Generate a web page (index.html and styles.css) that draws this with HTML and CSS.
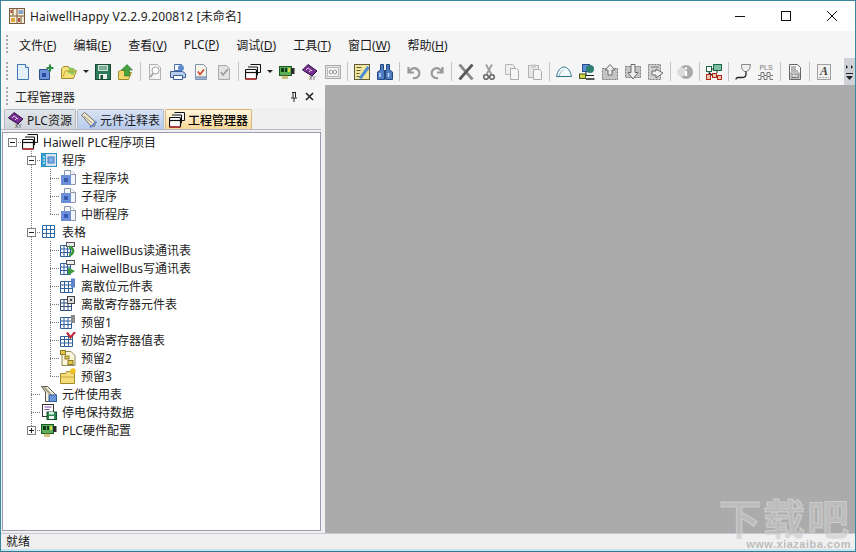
FILE: index.html
```html
<!DOCTYPE html>
<html lang="zh-CN">
<head>
  <meta charset="UTF-8" />
  <title>HaiwellHappy</title>
  <link rel="stylesheet" href="styles.css">
</head>
<body>

  <!-- icon sprites -->
  <svg class="sprites" width="0" height="0">
    <symbol id="i-app" viewBox="0 0 16 16"><rect x=".5" y=".5" width="15" height="15" fill="#f4ecd8" stroke="#7a5a38"/><path d="M.5 8h15M8 .5v15M4 .5v7M12 8v7" stroke="#7a5a38"/><rect x="1.500" y="2" width="2" height="3" fill="#b04a3a"/><rect x="9.500" y="2" width="5" height="4" fill="#8aa4c8"/><rect x="2" y="10" width="4" height="4" fill="#d8a838"/><rect x="9" y="10" width="2" height="4" fill="#b04a3a"/></symbol>
    <symbol id="i-new" viewBox="0 0 16 16"><path d="M2.500 .5h8l3 3v12h-11z" fill="#e4f0fb" stroke="#3f78b4"/><path d="M10.500 .5v3h3" fill="#fff" stroke="#3f78b4"/></symbol>
    <symbol id="i-addprog" viewBox="0 0 16 16"><path d="M1.500 5.500h8l2 2v8h-10z" fill="#6f94d8" stroke="#2f4f90"/><rect x="4" y="9" width="4" height="4" fill="#2a4c9c"/><path d="M12 .5v7M8.500 4h7" stroke="#2e8b45" stroke-width="2.200"/></symbol>
    <symbol id="i-open" viewBox="0 0 16 16"><path d="M.5 14.500v-10l2-2h5l1 2h4v2h3l-3 8z" fill="#f6e07a" stroke="#a08a2e"/><path d="M6 8l3-5 6 3-3 5z" fill="#8cc85c"/><path d="M2 13l2-6h10" fill="none" stroke="#c8a838"/></symbol>
    <symbol id="i-save" viewBox="0 0 16 16"><rect x=".5" y=".5" width="15" height="15" fill="#2c7a58" stroke="#174a32"/><rect x="3" y="1" width="10" height="6" fill="#cfe2d8"/><path d="M4 3h8M4 5h8" stroke="#2c7a58"/><rect x="4" y="10" width="8" height="5" fill="#f0f0f0"/><rect x="5.500" y="11" width="2.500" height="4" fill="#174a32"/></symbol>
    <symbol id="i-upload" viewBox="0 0 16 16"><path d="M.5 15.500v-8l2-1h8v2h3l-3 7z" fill="#f2d86a" stroke="#a08a2e"/><path d="M9 .5l5.500 5.500h-3v6h-5V6h-3z" fill="#44a23c" stroke="#2c7028" stroke-width=".6"/></symbol>
    <symbol id="i-preview" viewBox="0 0 16 16"><path d="M2.500 .5h8l3 3v12h-11z" fill="#f4f4f4" stroke="#b0b0b0"/><circle cx="8.500" cy="6.500" r="3.500" fill="#fff" stroke="#a0a0a0"/><path d="M6 9.500l-2.500 3.500" stroke="#a0a0a0" stroke-width="1.800"/></symbol>
    <symbol id="i-print" viewBox="0 0 16 16"><path d="M4.500 .5h7v6h-7z" fill="#fff" stroke="#4a6fa8"/><path d="M.5 7.500h12l3 2v4h-15z" fill="#b8cdea" stroke="#3d5f98"/><path d="M3.500 11.500h9v4h-9z" fill="#fff" stroke="#3d5f98"/><circle cx="11" cy="4" r="3" fill="#5f8cce"/></symbol>
    <symbol id="i-check" viewBox="0 0 16 16"><path d="M2.500 .5h8l3 3v12h-11z" fill="#f6f2e4" stroke="#7f95b4"/><path d="M5 7.500l2 3 4-5" fill="none" stroke="#d0402c" stroke-width="1.600"/><path d="M3 13.500h10" stroke="#8aa0c4" stroke-width="2.500"/></symbol>
    <symbol id="i-checkgray" viewBox="0 0 16 16"><path d="M2.500 1.500h8l3 3v11h-11z" fill="#e2e2e2" stroke="#a8a8a8"/><path d="M5 8l2 3 5-6" fill="none" stroke="#9a9a9a" stroke-width="1.600"/></symbol>
    <symbol id="i-stack" viewBox="0 0 16 16"><path d="M5.500 .5h10v8h-3" fill="#f6f6f6" stroke="#111"/><path d="M3 3h9.500v8h-3" fill="#f6f6f6" stroke="#111"/><rect x=".5" y="5.500" width="11" height="9.500" rx="1" fill="#fff" stroke="#111" stroke-width="1.200"/><path d="M.5 8.500h11" stroke="#111" stroke-width="1.200"/><path d="M.5 15h11" stroke="#b82a2a" stroke-width="1.500"/></symbol>
    <symbol id="i-board" viewBox="0 0 16 16"><rect x="0.500" y="2.500" width="12" height="9" fill="#5cae58" stroke="#1c5a24"/><rect x="2" y="4" width="3" height="4" fill="#123c18"/><rect x="6" y="4" width="2" height="4" fill="#123c18"/><rect x="9" y="4" width="2" height="4" fill="#d4e04c"/><rect x="12" y="4" width="3.500" height="6" fill="#2b2b2b"/><path d="M4 11.500v3.500M6 11.500v3.500M8 11.500v3.500" stroke="#b09a30" stroke-width="1.200"/></symbol>
    <symbol id="i-cc" viewBox="0 0 16 16"><rect x=".5" y="1.500" width="15" height="13" fill="#e4e4e4" stroke="#aaa"/><rect x="2.500" y="3.500" width="11" height="9" fill="#f4f4f4" stroke="#bbb"/><circle cx="6" cy="8" r="1.800" fill="none" stroke="#999"/><circle cx="10" cy="8" r="1.800" fill="none" stroke="#999"/></symbol>
    <symbol id="i-list" viewBox="0 0 16 16"><rect x=".5" y=".5" width="15" height="15" fill="#f2e69c" stroke="#5c5c3c"/><path d="M2.500 3.500h5M2.500 6.500h4M2.500 9.500h3M2.500 12.500h3" stroke="#5c5c3c"/><path d="M6 14.500L14.500 3" stroke="#4f8cd0" stroke-width="3"/></symbol>
    <symbol id="i-binoc" viewBox="0 0 16 16"><path d="M3.500 .5h3v5l1 2v8h-7V8l3-2zM9.500 .5h3V6l3 2v7.500h-7v-8l1-2z" fill="#4d7cc0" stroke="#24477e"/><rect x="7" y="6" width="2" height="3" fill="#24477e"/><path d="M3 9v4M11.500 9v4" stroke="#c4d8f4" stroke-width="1.500"/></symbol>
    <symbol id="i-undo" viewBox="0 0 16 16"><path d="M2.500 3v5.500H8M3.500 8A5 5 0 1 1 7 14" fill="none" stroke="#9a9a9a" stroke-width="2.200"/></symbol>
    <symbol id="i-redo" viewBox="0 0 16 16"><path d="M13.500 3v5.500H8M12.500 8A5 5 0 1 0 9 14" fill="none" stroke="#9a9a9a" stroke-width="2.200"/></symbol>
    <symbol id="i-delete" viewBox="0 0 16 16"><path d="M1.500 .5l13 15" stroke="#8a8a8a" stroke-width="2.800"/><path d="M14.500 .5L1.500 15.500" stroke="#585858" stroke-width="2.800"/></symbol>
    <symbol id="i-cut" viewBox="0 0 16 16"><path d="M5 .5l5.500 10M11 .5L5.500 10.500" stroke="#9c9c9c" stroke-width="1.800"/><circle cx="5" cy="13" r="2.300" fill="none" stroke="#686868" stroke-width="1.600"/><circle cx="11" cy="13" r="2.300" fill="none" stroke="#686868" stroke-width="1.600"/></symbol>
    <symbol id="i-copy" viewBox="0 0 16 16"><path d="M1.500 .5h7l2 2v8h-9z" fill="#eee" stroke="#b4b4b4"/><path d="M6.500 4.500h6l2 2v9h-8z" fill="#f6f6f6" stroke="#acacac"/></symbol>
    <symbol id="i-paste" viewBox="0 0 16 16"><rect x="1.500" y="1.500" width="10" height="12" fill="#e6e6e6" stroke="#b4b4b4"/><rect x="4" y=".5" width="5" height="3" fill="#c8c8c8"/><path d="M6.500 5.500h6l2 2v8h-8z" fill="#f6f6f6" stroke="#acacac"/></symbol>
    <symbol id="i-cloud" viewBox="0 0 16 16"><path d="M.5 12.500C1.500 7 4.500 3 8 3s6.500 4 7.500 9.500z" fill="#f4f9fc" stroke="#2f7488"/><path d="M3 12c1-3 3-6 5-6" fill="none" stroke="#8ab8c8"/></symbol>
    <symbol id="i-net" viewBox="0 0 16 16"><rect x="3.500" y=".5" width="7" height="7" fill="#5d8fd6" stroke="#2b4f8c"/><circle cx="11" cy="5" r="4" fill="#2f7f70"/><path d="M7 8v4M1 11.500h14" stroke="#222"/><rect x=".5" y="10" width="6" height="4.500" fill="#d8d040" stroke="#3a5a20"/><path d="M7 15h8.500" stroke="#222" stroke-width="1.500"/></symbol>
    <symbol id="i-grayup" viewBox="0 0 16 16"><rect x=".5" y="4.500" width="15" height="11" fill="#c4c4c4" stroke="#7c7c7c" stroke-dasharray="2 1"/><path d="M8 .5l5 5.500h-3v5H6V6H3z" fill="#eee" stroke="#6c6c6c"/></symbol>
    <symbol id="i-graydown" viewBox="0 0 16 16"><rect x=".5" y="2.500" width="15" height="11" fill="#c4c4c4" stroke="#7c7c7c" stroke-dasharray="2 1"/><path d="M6 .5h4v8h3l-5 6.500-5-6.500h3z" fill="#eee" stroke="#6c6c6c"/></symbol>
    <symbol id="i-grayright" viewBox="0 0 16 16"><rect x=".5" y=".5" width="12" height="15" fill="#cfcfcf" stroke="#7c7c7c" stroke-dasharray="2 1"/><path d="M8 5v2H4v4h4v3l7-5z" fill="#eee" stroke="#6c6c6c"/><path d="M3 3h8" stroke="#777"/></symbol>
    <symbol id="i-info" viewBox="0 0 16 16"><circle cx="9" cy="8" r="7" fill="#aaa"/><circle cx="4.500" cy="8" r="4.500" fill="#dcdcdc"/><path d="M9 3.500v2M9 7v5" stroke="#fff" stroke-width="2.200"/></symbol>
    <symbol id="i-tree" viewBox="0 0 16 16"><rect x="7.500" y=".5" width="8" height="6" fill="#7ec0a0" stroke="#1c6a4a"/><rect x=".5" y="2.500" width="5" height="5" fill="#fff" stroke="#1c6a4a"/><path d="M5 5h3M3 8v3h4M11 6v3" stroke="#333"/><rect x=".5" y="10.500" width="4" height="5" fill="#f0c4b4" stroke="#b02a1a"/><rect x="6.500" y="9.500" width="4" height="4" fill="#f0c4b4" stroke="#b02a1a"/><rect x="11.500" y="11.500" width="4" height="4" fill="#f0c4b4" stroke="#b02a1a"/></symbol>
    <symbol id="i-plug" viewBox="0 0 16 16"><path d="M6.500 .5h9l-1 5-3 2H9L7 5z" fill="#efefef" stroke="#888"/><path d="M11 7.500v3c0 2.500-1.500 3-4 3H3c-1 0-2 .5-2 2" fill="none" stroke="#222" stroke-width="1.300"/></symbol>
    <symbol id="i-note" viewBox="0 0 16 16"><path d="M.5 3l3-2.500 11 9.500-1 4.500-4-1z" fill="#f6ecc8" stroke="#6c6c6c"/><path d="M9 15.500l6.500-6" stroke="#6a86c8" stroke-width="2"/><path d="M3 4l8 7" stroke="#8a8a8a"/></symbol>
    <symbol id="i-prog" viewBox="0 0 16 16"><rect x=".5" y="1.500" width="15" height="13" fill="#d4e6f6" stroke="#2a90c0"/><rect x="1" y="2" width="4" height="12" fill="#35a0d0"/><path d="M2 5h2M2 8h2M2 11h2" stroke="#fff"/><rect x="7" y="5" width="6" height="6" fill="#82aee8" stroke="#5078b8"/></symbol>
    <symbol id="i-block" viewBox="0 0 16 16"><path d="M4.500 .5h6l5 4v10h-11z" fill="#f4f6fa" stroke="#8a96aa"/><path d="M10.500 .5v4h5" fill="#fff" stroke="#8a96aa"/><rect x="1" y="5" width="10" height="10" fill="#6d8ed8"/><rect x="4" y="8" width="4" height="4" fill="#3a5cb0"/></symbol>
    <symbol id="i-grid" viewBox="0 0 16 16"><path d="M1.500 1.500h12v12h-12zM1.500 5.500h12M1.500 9.500h12M5.500 1.500v12M9.500 1.500v12" fill="#fff" stroke="#2f6aa4"/></symbol>
    <symbol id="i-gridread" viewBox="0 0 16 16"><path d="M.5 3.500h10v11H.5zM.5 7h10M.5 10.500h10M4 3.500v11M7.500 3.500v11" fill="#fff" stroke="#2f5f9c"/><rect x="6.500" y=".5" width="8" height="4" fill="#eee" stroke="#555"/><path d="M9 5a4 4 0 1 1 0 8" fill="none" stroke="#3d9a3a" stroke-width="2.800"/></symbol>
    <symbol id="i-gridwrite" viewBox="0 0 16 16"><path d="M.5 3.500h10v11H.5zM.5 7h10M.5 10.500h10M4 3.500v11M7.500 3.500v11" fill="#fff" stroke="#2f5f9c"/><rect x="6.500" y=".5" width="8" height="4" fill="#eee" stroke="#555"/><path d="M8 7.500l7 3.500-7 4.500z" fill="#3d9a3a"/></symbol>
    <symbol id="i-gridbit" viewBox="0 0 16 16"><path d="M.5 3.500h12v11H.5zM.5 7h12M.5 10.500h12M4.500 3.500v11M8.500 3.500v11" fill="#fff" stroke="#2f5f9c"/><rect x="11" y=".5" width="4" height="9" fill="#5f80cc"/></symbol>
    <symbol id="i-gridreg" viewBox="0 0 16 16"><path d="M.5 3.500h11v11H.5zM.5 7h11M.5 10.500h11M4 3.500v11M8 3.500v11" fill="#fff" stroke="#2f4f7c"/><rect x="7.500" y=".5" width="7" height="7" fill="#ddd" stroke="#444"/><rect x="10" y="3" width="2" height="2" fill="#444"/></symbol>
    <symbol id="i-gridres" viewBox="0 0 16 16"><path d="M.5 3.500h11v11H.5zM.5 7h11M.5 10.500h11M4 3.500v11M8 3.500v11" fill="#fff" stroke="#2f5f9c"/><path d="M11 1h4v8h-4z" fill="#8c8c8c"/></symbol>
    <symbol id="i-gridinit" viewBox="0 0 16 16"><path d="M.5 4.500h12v10H.5zM.5 7.500h12M.5 11h12M4.500 4.500v10M8.500 4.500v10" fill="#fff" stroke="#2f5f9c"/><path d="M7 .5l3.500 5 4.500-5.500" fill="none" stroke="#c42a3a" stroke-width="2.200"/></symbol>
    <symbol id="i-sheet" viewBox="0 0 16 16"><path d="M2 1.500h9l4 4v10H2z" fill="#fbf6d8" stroke="#8a8a5a"/><rect x=".5" y=".5" width="5" height="4" fill="#e8c848" stroke="#8a7a2a"/><rect x="5" y="6" width="4" height="3" fill="#e8c848" stroke="#8a7a2a"/><rect x="8" y="10.500" width="5" height="4" fill="#e8c848" stroke="#8a7a2a"/></symbol>
    <symbol id="i-folder" viewBox="0 0 16 16"><path d="M.5 15.500v-10h5l1-2h5v2h3v10z" fill="#f6dc78" stroke="#a08a2e"/><path d="M.5 9h14" stroke="#c8a840"/><circle cx="13" cy="3" r="2.800" fill="#f4c020"/></symbol>
    <symbol id="i-usage" viewBox="0 0 16 16"><path d="M.5 .5h6l8.500 8.500v6.500H4.500V6z" fill="#f6f2e0" stroke="#555"/><path d="M3 1l8 9" stroke="#a8a080" stroke-width="2"/><rect x="8" y="9" width="7.500" height="6.500" fill="#6a96d8" stroke="#2f5f9c"/></symbol>
    <symbol id="i-retain" viewBox="0 0 16 16"><rect x="1.500" y=".5" width="11" height="12" fill="#fff" stroke="#333"/><path d="M3.500 3h7M3.500 5.500h5" stroke="#7a4aa8"/><rect x="6" y="8" width="9.500" height="7.500" fill="#2f8a50" stroke="#14502c"/><rect x="8" y="8" width="5" height="2.500" fill="#e0efe4"/><rect x="8" y="12" width="5" height="3" fill="#f4f4f4"/></symbol>
  </svg>

  <div class="window">
    <div class="titlebar">
      <svg class="icon app-icon"><use href="#i-app"/></svg>
      <span class="title-text">HaiwellHappy V2.2.9.200812 [未命名]</span>
      <div class="win-buttons">
        <svg class="win-btn" viewBox="0 0 46 30"><path d="M18 15.500h10" stroke="#111"/></svg>
        <svg class="win-btn" viewBox="0 0 46 30"><rect x="18.500" y="10.500" width="9" height="9" fill="none" stroke="#111"/></svg>
        <svg class="win-btn" viewBox="0 0 46 30"><path d="M18 10l10 10M28 10L18 20" stroke="#111" fill="none"/></svg>
      </div>
    </div>

    <div class="menubar">
      <span class="grip"></span>
      <span class="menu-item">文件(<u>F</u>)</span>
      <span class="menu-item">编辑(<u>E</u>)</span>
      <span class="menu-item">查看(<u>V</u>)</span>
      <span class="menu-item">PLC(<u>P</u>)</span>
      <span class="menu-item">调试(<u>D</u>)</span>
      <span class="menu-item">工具(<u>T</u>)</span>
      <span class="menu-item">窗口(<u>W</u>)</span>
      <span class="menu-item">帮助(<u>H</u>)</span>
    </div>

    <div class="toolbar">
      <span class="grip"></span>
      <span class="tool"><svg class="icon"><use href="#i-new"/></svg></span>
      <span class="tool"><svg class="icon"><use href="#i-addprog"/></svg></span>
      <span class="tool"><svg class="icon"><use href="#i-open"/></svg></span>
      <span class="drop"></span>
      <span class="tool"><svg class="icon"><use href="#i-save"/></svg></span>
      <span class="tool"><svg class="icon"><use href="#i-upload"/></svg></span>
      <span class="sep"></span>
      <span class="tool"><svg class="icon"><use href="#i-preview"/></svg></span>
      <span class="tool"><svg class="icon"><use href="#i-print"/></svg></span>
      <span class="tool"><svg class="icon"><use href="#i-check"/></svg></span>
      <span class="tool"><svg class="icon"><use href="#i-checkgray"/></svg></span>
      <span class="sep"></span>
      <span class="tool"><svg class="icon"><use href="#i-stack"/></svg></span>
      <span class="drop"></span>
      <span class="tool"><svg class="icon"><use href="#i-board"/></svg></span>
      <span class="tool">
        <svg class="icon" viewBox="0 0 16 16"><path d="M.5 6l5.500-5.500 9 6.500-5 5z" fill="#7a2f92" stroke="#2f1040"/><path d="M4 6l2-2M7 8l2-2M6 4l4 3" stroke="#e4c8f0"/><text x="7" y="16" class="svg-xy">XY</text></svg>
      </span>
      <span class="tool"><svg class="icon"><use href="#i-cc"/></svg></span>
      <span class="sep"></span>
      <span class="tool"><svg class="icon"><use href="#i-list"/></svg></span>
      <span class="tool"><svg class="icon"><use href="#i-binoc"/></svg></span>
      <span class="sep"></span>
      <span class="tool"><svg class="icon"><use href="#i-undo"/></svg></span>
      <span class="tool"><svg class="icon"><use href="#i-redo"/></svg></span>
      <span class="sep"></span>
      <span class="tool"><svg class="icon"><use href="#i-delete"/></svg></span>
      <span class="tool"><svg class="icon"><use href="#i-cut"/></svg></span>
      <span class="tool"><svg class="icon"><use href="#i-copy"/></svg></span>
      <span class="tool"><svg class="icon"><use href="#i-paste"/></svg></span>
      <span class="sep"></span>
      <span class="tool"><svg class="icon"><use href="#i-cloud"/></svg></span>
      <span class="tool"><svg class="icon"><use href="#i-net"/></svg></span>
      <span class="tool"><svg class="icon"><use href="#i-grayup"/></svg></span>
      <span class="tool"><svg class="icon"><use href="#i-graydown"/></svg></span>
      <span class="tool"><svg class="icon"><use href="#i-grayright"/></svg></span>
      <span class="sep"></span>
      <span class="tool"><svg class="icon"><use href="#i-info"/></svg></span>
      <span class="sep"></span>
      <span class="tool"><svg class="icon"><use href="#i-tree"/></svg></span>
      <span class="sep"></span>
      <span class="tool"><svg class="icon"><use href="#i-plug"/></svg></span>
      <span class="tool">
        <svg class="icon" viewBox="0 0 16 16"><text x="8" y="6" class="svg-pls">PLS</text><path d="M0 11.500h3v-3h3v3h3v-3h3v3h3M0 15.500h3v-3h3v3h3v-3h3v3h3" fill="none" stroke="#777"/></svg>
      </span>
      <span class="sep"></span>
      <span class="tool">
        <svg class="icon" viewBox="0 0 16 16"><path d="M2.500 .5h8l3 3v12h-11z" fill="#fafafa" stroke="#666"/><path d="M4 3h5M4 5h5M4 7h7" stroke="#777"/><rect x="4" y="9" width="8" height="5" fill="#eee" stroke="#888"/><text x="8" y="13.500" class="svg-num">123</text></svg>
      </span>
      <span class="sep"></span>
      <span class="tool">
        <svg class="icon" viewBox="0 0 16 16"><rect x="1.500" y=".5" width="13" height="15" fill="#f0f0f0" stroke="#a0a0a0"/><text x="8" y="11" class="svg-a">A</text><path d="M3 13.500h10" stroke="#a8a8a8" stroke-dasharray="2 1"/></svg>
      </span>
      <span class="overflow">
        <svg class="overflow-icon" viewBox="0 0 11 24"><path d="M2 5l2 2-2 2zM7 5l2 2-2 2z" fill="#222"/><path d="M2 13.500h7" stroke="#222"/><path d="M2 16h7l-3.500 4z" fill="#222"/></svg>
      </span>
    </div>

    <div class="main">
      <div class="panel">
        <div class="panel-head">
          <span class="grip"></span>
          <span class="panel-title">工程管理器</span>
          <svg class="panel-btn" viewBox="0 0 12 12"><path d="M4 1.500h4M5 1.500v5M7.500 1.500v5M3 7h6M6 7v4" stroke="#222" fill="none"/></svg>
          <svg class="panel-btn" viewBox="0 0 12 12"><path d="M2 2l7 7M9 2L2 9" stroke="#222" stroke-width="1.600"/></svg>
        </div>

        <div class="tabs">
          <span class="tab tab-plc">
            <svg class="icon" viewBox="0 0 16 16"><path d="M.5 6l5.500-5.500 9 6.500-5 5z" fill="#7a2f92" stroke="#2f1040"/><path d="M4 6l2-2M7 8l2-2M6 4l4 3" stroke="#e4c8f0"/><text x="7" y="16" class="svg-xy">XY</text></svg>
            PLC资源
          </span>
          <span class="tab tab-notes"><svg class="icon"><use href="#i-note"/></svg>元件注释表</span>
          <span class="tab tab-active"><svg class="icon"><use href="#i-stack"/></svg>工程管理器</span>
        </div>

        <div class="tree">
          <div class="row"><span class="cell h"><i class="exp"></i></span><svg class="icon"><use href="#i-stack"/></svg><span class="label">Haiwell PLC程序项目</span></div>

          <div class="row"><span class="cell"></span><span class="cell tee-half"><i class="exp"></i></span><svg class="icon"><use href="#i-prog"/></svg><span class="label">程序</span></div>
          <div class="row"><span class="cell"></span><span class="cell v"></span><span class="cell tee"></span><svg class="icon"><use href="#i-block"/></svg><span class="label">主程序块</span></div>
          <div class="row"><span class="cell"></span><span class="cell v"></span><span class="cell tee"></span><svg class="icon"><use href="#i-block"/></svg><span class="label">子程序</span></div>
          <div class="row"><span class="cell"></span><span class="cell v"></span><span class="cell corner"></span><svg class="icon"><use href="#i-block"/></svg><span class="label">中断程序</span></div>

          <div class="row"><span class="cell"></span><span class="cell tee-half"><i class="exp"></i></span><svg class="icon"><use href="#i-grid"/></svg><span class="label">表格</span></div>
          <div class="row"><span class="cell"></span><span class="cell v"></span><span class="cell tee"></span><svg class="icon"><use href="#i-gridread"/></svg><span class="label">HaiwellBus读通讯表</span></div>
          <div class="row"><span class="cell"></span><span class="cell v"></span><span class="cell tee"></span><svg class="icon"><use href="#i-gridwrite"/></svg><span class="label">HaiwellBus写通讯表</span></div>
          <div class="row"><span class="cell"></span><span class="cell v"></span><span class="cell tee"></span><svg class="icon"><use href="#i-gridbit"/></svg><span class="label">离散位元件表</span></div>
          <div class="row"><span class="cell"></span><span class="cell v"></span><span class="cell tee"></span><svg class="icon"><use href="#i-gridreg"/></svg><span class="label">离散寄存器元件表</span></div>
          <div class="row"><span class="cell"></span><span class="cell v"></span><span class="cell tee"></span><svg class="icon"><use href="#i-gridres"/></svg><span class="label">预留1</span></div>
          <div class="row"><span class="cell"></span><span class="cell v"></span><span class="cell tee"></span><svg class="icon"><use href="#i-gridinit"/></svg><span class="label">初始寄存器值表</span></div>
          <div class="row"><span class="cell"></span><span class="cell v"></span><span class="cell tee"></span><svg class="icon"><use href="#i-sheet"/></svg><span class="label">预留2</span></div>
          <div class="row"><span class="cell"></span><span class="cell v"></span><span class="cell corner"></span><svg class="icon"><use href="#i-folder"/></svg><span class="label">预留3</span></div>

          <div class="row"><span class="cell"></span><span class="cell tee"></span><svg class="icon"><use href="#i-usage"/></svg><span class="label">元件使用表</span></div>
          <div class="row"><span class="cell"></span><span class="cell tee"></span><svg class="icon"><use href="#i-retain"/></svg><span class="label">停电保持数据</span></div>
          <div class="row"><span class="cell"></span><span class="cell corner"><i class="exp exp-plus"></i></span><svg class="icon"><use href="#i-board"/></svg><span class="label">PLC硬件配置</span></div>
        </div>
      </div>

      <div class="client"></div>
    </div>

    <div class="statusbar">就绪</div>

    <!-- site watermark over the bottom right corner -->
    <div class="watermark">
      <span class="wm-big">下载吧</span>
      <span class="wm-url">www.xiazaiba.com</span>
    </div>
  </div>

</body>
</html>
```

FILE: styles.css
```css
* {
  box-sizing: border-box;
}

body {
  margin: 0;
  width: 856px;
  height: 552px;
  overflow: hidden;
  font-family: "Noto Sans", "Noto Sans CJK SC", sans-serif;
  font-size: 12px;
  color: #1a1a1a;
  background: #fff;
}

.sprites {
  display: block;
  height: 0;
}

.svg-xy {
  font: 5px "Liberation Sans", sans-serif;
  fill: #222;
}

.svg-pls {
  font: 7px "Liberation Sans", sans-serif;
  fill: #777;
  text-anchor: middle;
}

.svg-num {
  font: 4.500px "Liberation Sans", sans-serif;
  fill: #444;
  text-anchor: middle;
}

.svg-a {
  font: italic bold 12px "Liberation Serif", serif;
  fill: #444;
  text-anchor: middle;
}

.window {
  position: relative;
  height: 552px;
  display: flex;
  flex-direction: column;
  border-top: 1px solid #3a87a0;
  border-left: 1px solid #3a87a0;
  border-right: 1px solid #3a87a0;
  border-bottom: 1px solid #2f7a90;
  overflow: hidden;
}

.icon {
  width: 16px;
  height: 16px;
  flex: none;
}

.grip {
  width: 2px;
  height: 20px;
  flex: none;
  background: repeating-linear-gradient(to bottom, #a8a8a8 0 2px, transparent 2px 4px);
}

.titlebar {
  height: 30px;
  flex: none;
  display: flex;
  align-items: center;
  background: #fff;
  padding-left: 8px;
}

.app-icon {
  margin-top: -1px;
}

.title-text {
  margin-left: 5px;
  margin-top: -1px;
  font-size: 12px;
  letter-spacing: 0.16px;
  color: #222;
}

.win-buttons {
  margin-left: auto;
  display: flex;
  margin-right: 0;
}

.win-btn {
  width: 46px;
  height: 30px;
  display: block;
}

.menubar {
  height: 27px;
  flex: none;
  display: flex;
  align-items: center;
  background: #f5f5f5;
  padding-left: 5px;
}

.menu-item {
  margin-left: 11px;
  margin-right: 6px;
  font-size: 12px;
  white-space: nowrap;
}

.toolbar {
  height: 27px;
  flex: none;
  display: flex;
  align-items: center;
  background: #f5f5f5;
  padding-left: 5px;
}

.toolbar .grip {
  margin-right: 3px;
}

.tool {
  width: 23px;
  height: 24px;
  flex: none;
  display: flex;
  align-items: center;
  justify-content: center;
}

.drop {
  width: 11px;
  height: 24px;
  flex: none;
  display: flex;
  align-items: center;
  justify-content: center;
}

.drop::after {
  content: "";
  border-left: 3px solid transparent;
  border-right: 3px solid transparent;
  border-top: 3px solid #222;
}

.sep {
  width: 1px;
  height: 19px;
  flex: none;
  margin: 0 2.5px;
  background: #c4c4c4;
}

.overflow {
  margin-left: auto;
  width: 11px;
  height: 27px;
  flex: none;
  background: #cfd3d8;
}

.overflow-icon {
  display: block;
  width: 11px;
  height: 24px;
  margin-top: 2px;
}

.main {
  flex: 1;
  min-height: 0;
  display: flex;
}

.panel {
  width: 324px;
  flex: none;
  display: flex;
  flex-direction: column;
  background: #f0f0f0;
  padding-right: 4px;
}

.panel-head {
  height: 23px;
  flex: none;
  display: flex;
  align-items: center;
  padding-left: 5px;
  background: #f5f5f5;
  margin-right: -4px;
}

.panel-title {
  margin-left: 7px;
  color: #222;
}

.panel-btn {
  width: 12px;
  height: 12px;
  flex: none;
}

.panel-head .panel-btn:nth-of-type(1) {
  margin-left: auto;
  margin-right: 4px;
}

.panel-head .panel-btn:nth-of-type(2) {
  margin-right: 9px;
}

.tabs {
  height: 22px;
  flex: none;
  display: flex;
  align-items: flex-end;
  padding-left: 3px;
  gap: 1px;
  border-bottom: 1px solid #b8b8c4;
}

.tab {
  height: 20px;
  display: flex;
  align-items: center;
  gap: 3px;
  padding: 0 3px;
  border: 1px solid #b4bac4;
  border-bottom: none;
  border-radius: 2px 2px 0 0;
  white-space: nowrap;
}

.tab-plc {
  width: 72px;
  background: linear-gradient(to bottom, #e2e6ea, #ced4da);
}

.tab-notes {
  width: 87px;
  background: linear-gradient(to bottom, #d8e2f4, #b8cbec);
}

.tab-active {
  width: 87px;
  background: linear-gradient(to bottom, #fff4dc, #f8d898);
  border-color: #d8b878;
  font-weight: 500;
  color: #000;
}

.tree {
  flex: 1;
  min-height: 0;
  margin: 2px 0 2px 1px;
  width: 319px;
  background: #fff;
  border: 1px solid #9c9cb0;
}

.row {
  height: 18px;
  display: flex;
  align-items: center;
}

.cell {
  width: 19px;
  height: 18px;
  flex: none;
  display: flex;
  align-items: center;
  justify-content: center;
  background-repeat: no-repeat;
}

.v,
.tee,
.tee-half {
  background-image: repeating-linear-gradient(to bottom, #777 0 1px, transparent 1px 2px),
    repeating-linear-gradient(to right, #777 0 1px, transparent 1px 2px);
  background-size: 1px 18px, 10px 1px;
  background-position: 9px 0, 9px 9px;
}

.v {
  background-size: 1px 18px, 0 0;
}

.corner {
  background-image: repeating-linear-gradient(to bottom, #777 0 1px, transparent 1px 2px),
    repeating-linear-gradient(to right, #777 0 1px, transparent 1px 2px);
  background-size: 1px 9px, 10px 1px;
  background-position: 9px 0, 9px 9px;
}

.h {
  background-image: repeating-linear-gradient(to right, #777 0 1px, transparent 1px 2px);
  background-size: 10px 1px;
  background-position: 9px 9px;
}

.exp {
  display: block;
  width: 9px;
  height: 9px;
  border: 1px solid #808080;
  background: linear-gradient(#222, #222) center / 5px 1px no-repeat, #fff;
}

.exp-plus {
  background: linear-gradient(#222, #222) center / 5px 1px no-repeat,
    linear-gradient(#222, #222) center / 1px 5px no-repeat, #fff;
}

.label {
  margin-left: 5px;
  white-space: nowrap;
  color: #222;
}

.client {
  flex: 1;
  background: #ababab;
}

.statusbar {
  height: 16px;
  flex: none;
  padding-left: 5px;
  line-height: 16px;
  background: #f0f0f0;
  border-top: 1px solid #c8c8d4;
  border-bottom: 0;
  margin-bottom: 2px;
  box-shadow: 0 2px 0 #c4e4f0;
}

.watermark {
  position: absolute;
  right: 4px;
  bottom: 1px;
  display: flex;
  flex-direction: column;
  align-items: flex-end;
  pointer-events: none;
}

.wm-big {
  font: 700 42px/44px "Noto Sans CJK SC", sans-serif;
  letter-spacing: 2px;
  color: rgba(200, 200, 200, 0.6);
  -webkit-text-stroke: 1px rgba(235, 235, 235, 0.45);
}

.wm-url {
  font: 700 11px/11px "Liberation Sans", sans-serif;
  letter-spacing: 0.5px;
  color: rgba(120, 120, 120, 0.45);
}
```
